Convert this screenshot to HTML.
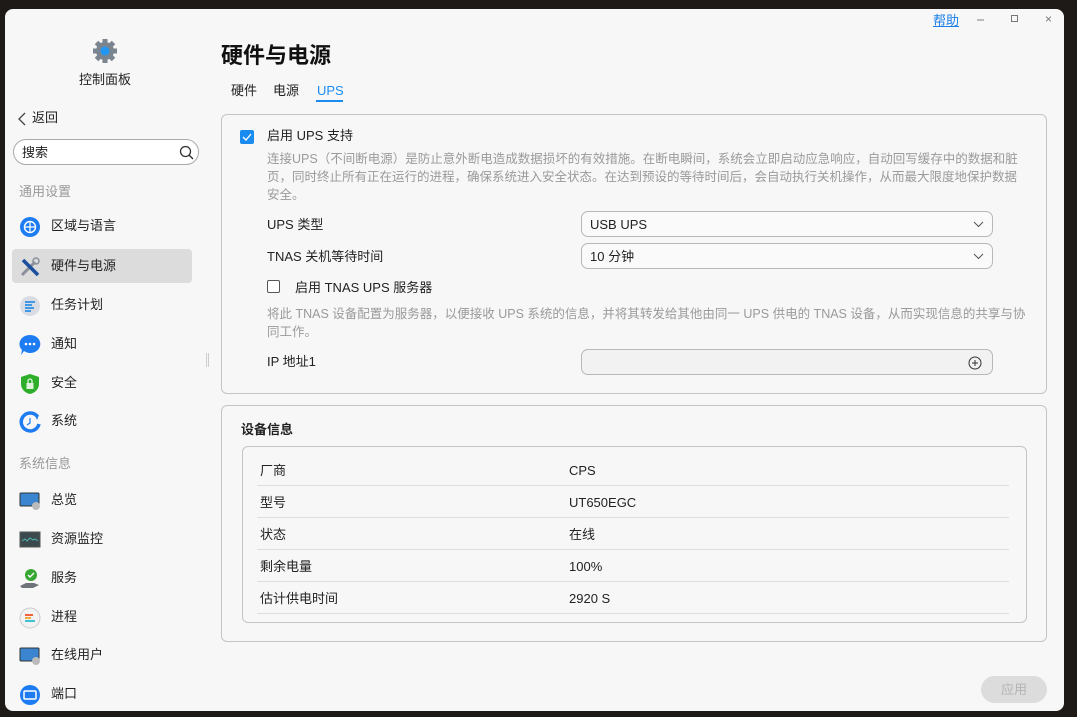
<!DOCTYPE html>
<html><head><meta charset="utf-8">
<style>
*{margin:0;padding:0;box-sizing:border-box}
body{width:1077px;height:717px;overflow:hidden;background:#1e1a17;font-family:"Liberation Sans","Noto Sans CJK SC",sans-serif;color:#222;font-size:13px;line-height:16px;position:relative}
.win{position:absolute;left:5px;top:9px;width:1059px;height:702px;background:#f7f7f7;border-radius:8px;overflow:hidden}
.a{position:absolute;white-space:nowrap}
.nav{position:absolute;left:0;width:187px;height:34px}
.nav .t{position:absolute;left:46px;top:9px;font-size:13px;color:#222}
.nav svg{position:absolute;left:14px;top:7px}
.grp{position:absolute;left:14px;font-size:13px;color:#999}
.box{position:absolute;border:1px solid #c4c4c4;border-radius:6px;background:#f7f7f7}
.sel{position:absolute;left:576px;width:412px;height:26px;border:1px solid #b8b8b8;border-radius:7px;background:#fafafa}
.sel span{position:absolute;left:8px;top:5px;font-size:13px}
.sel svg{position:absolute;right:8px;top:9px}
.row{position:absolute;left:252px;width:752px;height:32px;border-bottom:1px solid #ddd}
.row .k{position:absolute;left:3px;top:9px}
.row .v{position:absolute;left:312px;top:9px}
.gray{color:#9a9a9a;font-size:12.5px;line-height:18px}
</style></head><body>
<div class="win">
 <svg class="a" style="left:86px;top:28px" width="28" height="28" viewBox="0 0 28 28"><g fill="#7b8590"><circle cx="14" cy="14" r="9"/><g stroke="#7b8590" stroke-width="5"><line x1="14" y1="2" x2="14" y2="26"/><line x1="2" y1="14" x2="26" y2="14"/><line x1="5.5" y1="5.5" x2="22.5" y2="22.5"/><line x1="22.5" y1="5.5" x2="5.5" y2="22.5"/></g></g><circle cx="14" cy="14" r="4.5" fill="#2196f3"/></svg>
 <div class="a" style="left:74px;top:63px;font-size:13px">控制面板</div>
 <svg class="a" style="left:12px;top:103px" width="10" height="14"><path d="M8 1L2 7l6 6" stroke="#444" fill="none" stroke-width="1.3"/></svg>
 <div class="a" style="left:27px;top:101px">返回</div>
 <div class="a" style="left:8px;top:130px;width:186px;height:26px;border:1px solid #aaa;border-radius:13px;background:#fff"><span class="a" style="left:8px;top:5px">搜索</span>
 <svg class="a" style="left:165px;top:5px" width="15" height="15"><circle cx="6.5" cy="6.5" r="5" stroke="#333" fill="none" stroke-width="1.3"/><line x1="10" y1="10" x2="14" y2="14" stroke="#333" stroke-width="1.4"/></svg></div>
 <div class="grp" style="top:175px">通用设置</div>
 <div class="nav" style="top:200px"><svg width="22" height="22"><circle cx="11" cy="11" r="10" fill="#1e7cf2"/><circle cx="11" cy="11" r="5.5" fill="none" stroke="#fff" stroke-width="1.4"/><path d="M5.5 11h11M11 5.5v11" stroke="#fff" stroke-width="1.2"/></svg><span class="t">区域与语言</span></div>
 <div class="nav" style="top:240px;left:7px;width:180px;background:#dcdcdc;border-radius:4px"><svg style="left:7px" width="22" height="22"><path d="M3 19L16 6" stroke="#8a9099" stroke-width="3"/><path d="M4 4l15 15" stroke="#1b4f9e" stroke-width="3.5"/><circle cx="17" cy="5" r="3" fill="none" stroke="#8a9099" stroke-width="1.5"/></svg><span class="t" style="left:39px">硬件与电源</span></div>
 <div class="nav" style="top:279px"><svg width="22" height="22"><circle cx="11" cy="11" r="10" fill="#d9dde3"/><path d="M6 7h10M6 10h7M6 13h9M6 16h6" stroke="#2a8ee8" stroke-width="1.8"/></svg><span class="t">任务计划</span></div>
 <div class="nav" style="top:318px"><svg width="22" height="22"><path d="M11 1a10 9 0 1 1-6 16l-3 4 1-5a10 9 0 0 1 8-15z" fill="#1e7cf2"/><circle cx="7" cy="10" r="1.3" fill="#fff"/><circle cx="11" cy="10" r="1.3" fill="#fff"/><circle cx="15" cy="10" r="1.3" fill="#fff"/></svg><span class="t">通知</span></div>
 <div class="nav" style="top:357px"><svg width="22" height="22"><path d="M11 1l9 3v7c0 5-4 9-9 10C6 20 2 16 2 11V4z" fill="#2eae2a"/><rect x="7.5" y="10" width="7" height="6" fill="#dff3dc"/><path d="M9 10V8a2 2 0 0 1 4 0v2" stroke="#dff3dc" fill="none" stroke-width="1.3"/></svg><span class="t">安全</span></div>
 <div class="nav" style="top:395px"><svg width="22" height="22"><path d="M18 5A9 9 0 1 0 20 13" stroke="#1e7cf2" stroke-width="3.5" fill="none"/><path d="M15 2l5 2-2 5z" fill="#1e7cf2"/><path d="M11 7v5l-3 2" stroke="#1e7cf2" stroke-width="1.2" fill="none"/></svg><span class="t">系统</span></div>
 <div class="a" style="left:201px;top:344px;width:3px;height:14px;border-left:1px solid #ccc;border-right:1px solid #ccc"></div>
 <div class="grp" style="top:447px">系统信息</div>
 <div class="nav" style="top:474px"><svg width="22" height="22"><rect x="1" y="3" width="19" height="13" rx="1" fill="#3a84d0" stroke="#333"/><circle cx="17" cy="16" r="4" fill="#bbb"/></svg><span class="t">总览</span></div>
 <div class="nav" style="top:513px"><svg width="22" height="22"><rect x="1" y="3" width="20" height="15" fill="#3b4a4c" stroke="#555"/><path d="M3 12l3-2 2 2 3-3 3 2 2-1 3 2" stroke="#4fb3b1" fill="none"/></svg><span class="t">资源监控</span></div>
 <div class="nav" style="top:552px"><svg width="22" height="22"><circle cx="12" cy="7" r="6" fill="#37a632"/><path d="M9 7l2 2 4-4" stroke="#fff" fill="none" stroke-width="1.4"/><path d="M1 18l6-3h8l5 2-6 3H3z" fill="#6d7378"/></svg><span class="t">服务</span></div>
 <div class="nav" style="top:591px"><svg width="22" height="22"><circle cx="11" cy="11" r="10" fill="#f2f2f2" stroke="#ccc"/><path d="M6 8h8" stroke="#f0623e" stroke-width="2"/><path d="M6 11h6" stroke="#f2a93b" stroke-width="2"/><path d="M6 14h10" stroke="#3ec3d0" stroke-width="2"/></svg><span class="t">进程</span></div>
 <div class="nav" style="top:629px"><svg width="22" height="22"><rect x="1" y="3" width="19" height="13" rx="1" fill="#3a84d0" stroke="#333"/><circle cx="17" cy="16" r="4" fill="#bbb"/></svg><span class="t">在线用户</span></div>
 <div class="nav" style="top:668px"><svg width="22" height="22"><circle cx="11" cy="11" r="10" fill="#1e7cf2"/><rect x="5" y="7" width="12" height="8" rx="1" fill="none" stroke="#fff" stroke-width="1.5"/></svg><span class="t">端口</span></div>

 <div class="a" style="left:928px;top:4px;color:#1a7fe8;text-decoration:underline;font-size:13px">帮助</div>
 <div class="a" style="left:972px;top:10px;width:7px;height:2px;background:#bbb"></div>
 <div class="a" style="left:1006px;top:6px;width:7px;height:7px;border:1px solid #777"></div>
 <div class="a" style="left:1040px;top:2px;color:#777;font-size:12px">×</div>

 <div class="a" style="left:216px;top:34px;font-size:22px;line-height:26px;font-weight:bold;color:#111">硬件与电源</div>
 <div class="a" style="left:226px;top:74px">硬件</div>
 <div class="a" style="left:268px;top:74px">电源</div>
 <div class="a" style="left:312px;top:74px;color:#1a8cf0">UPS</div>
 <div class="a" style="left:311px;top:91px;width:27px;height:2px;background:#1a8cf0"></div>

 <div class="box" style="left:216px;top:105px;width:826px;height:280px"></div>
 <div class="a" style="left:235px;top:121px;width:14px;height:14px;background:#1a8cf0;border-radius:2px"><svg width="14" height="14"><path d="M3 7l3 3 5-6" stroke="#fff" fill="none" stroke-width="1.3"/></svg></div>
 <div class="a" style="left:262px;top:119px">启用 UPS 支持</div>
 <div class="a gray" style="left:262px;top:141px;width:760px;white-space:normal">连接UPS（不间断电源）是防止意外断电造成数据损坏的有效措施。在断电瞬间，系统会立即启动应急响应，自动回写缓存中的数据和脏页，同时终止所有正在运行的进程，确保系统进入安全状态。在达到预设的等待时间后，会自动执行关机操作，从而最大限度地保护数据安全。</div>
 <div class="a" style="left:262px;top:208px">UPS 类型</div>
 <div class="sel" style="top:202px"><span>USB UPS</span><svg width="11" height="7"><path d="M1 1l4.5 4.5L10 1" stroke="#555" fill="none"/></svg></div>
 <div class="a" style="left:262px;top:240px">TNAS 关机等待时间</div>
 <div class="sel" style="top:234px"><span>10 分钟</span><svg width="11" height="7"><path d="M1 1l4.5 4.5L10 1" stroke="#555" fill="none"/></svg></div>
 <div class="a" style="left:262px;top:271px;width:13px;height:13px;border:1px solid #555;border-radius:2px;background:#fff"></div>
 <div class="a" style="left:290px;top:271px">启用 TNAS UPS 服务器</div>
 <div class="a gray" style="left:262px;top:296px;width:760px;white-space:normal">将此 TNAS 设备配置为服务器，以便接收 UPS 系统的信息，并将其转发给其他由同一 UPS 供电的 TNAS 设备，从而实现信息的共享与协同工作。</div>
 <div class="a" style="left:262px;top:345px">IP 地址1</div>
 <div class="sel" style="top:340px;background:#f2f2f2"><svg style="top:6px;right:10px" width="14" height="14"><circle cx="7" cy="7" r="6" stroke="#333" fill="none"/><path d="M7 4v6M4 7h6" stroke="#333"/></svg></div>

 <div class="box" style="left:216px;top:396px;width:826px;height:237px"></div>
 <div class="a" style="left:236px;top:413px;font-weight:bold">设备信息</div>
 <div class="box" style="left:237px;top:437px;width:785px;height:177px;background:#f7f7f7"></div>
 <div class="row" style="top:445px"><span class="k">厂商</span><span class="v">CPS</span></div>
 <div class="row" style="top:477px"><span class="k">型号</span><span class="v">UT650EGC</span></div>
 <div class="row" style="top:509px"><span class="k">状态</span><span class="v">在线</span></div>
 <div class="row" style="top:541px"><span class="k">剩余电量</span><span class="v">100%</span></div>
 <div class="row" style="top:573px"><span class="k">估计供电时间</span><span class="v">2920 S</span></div>

 <div class="a" style="left:976px;top:667px;width:66px;height:27px;border-radius:14px;background:#dcdcdc;color:#b4b4b4;text-align:center;line-height:27px">应用</div>
</div>
</body></html>
